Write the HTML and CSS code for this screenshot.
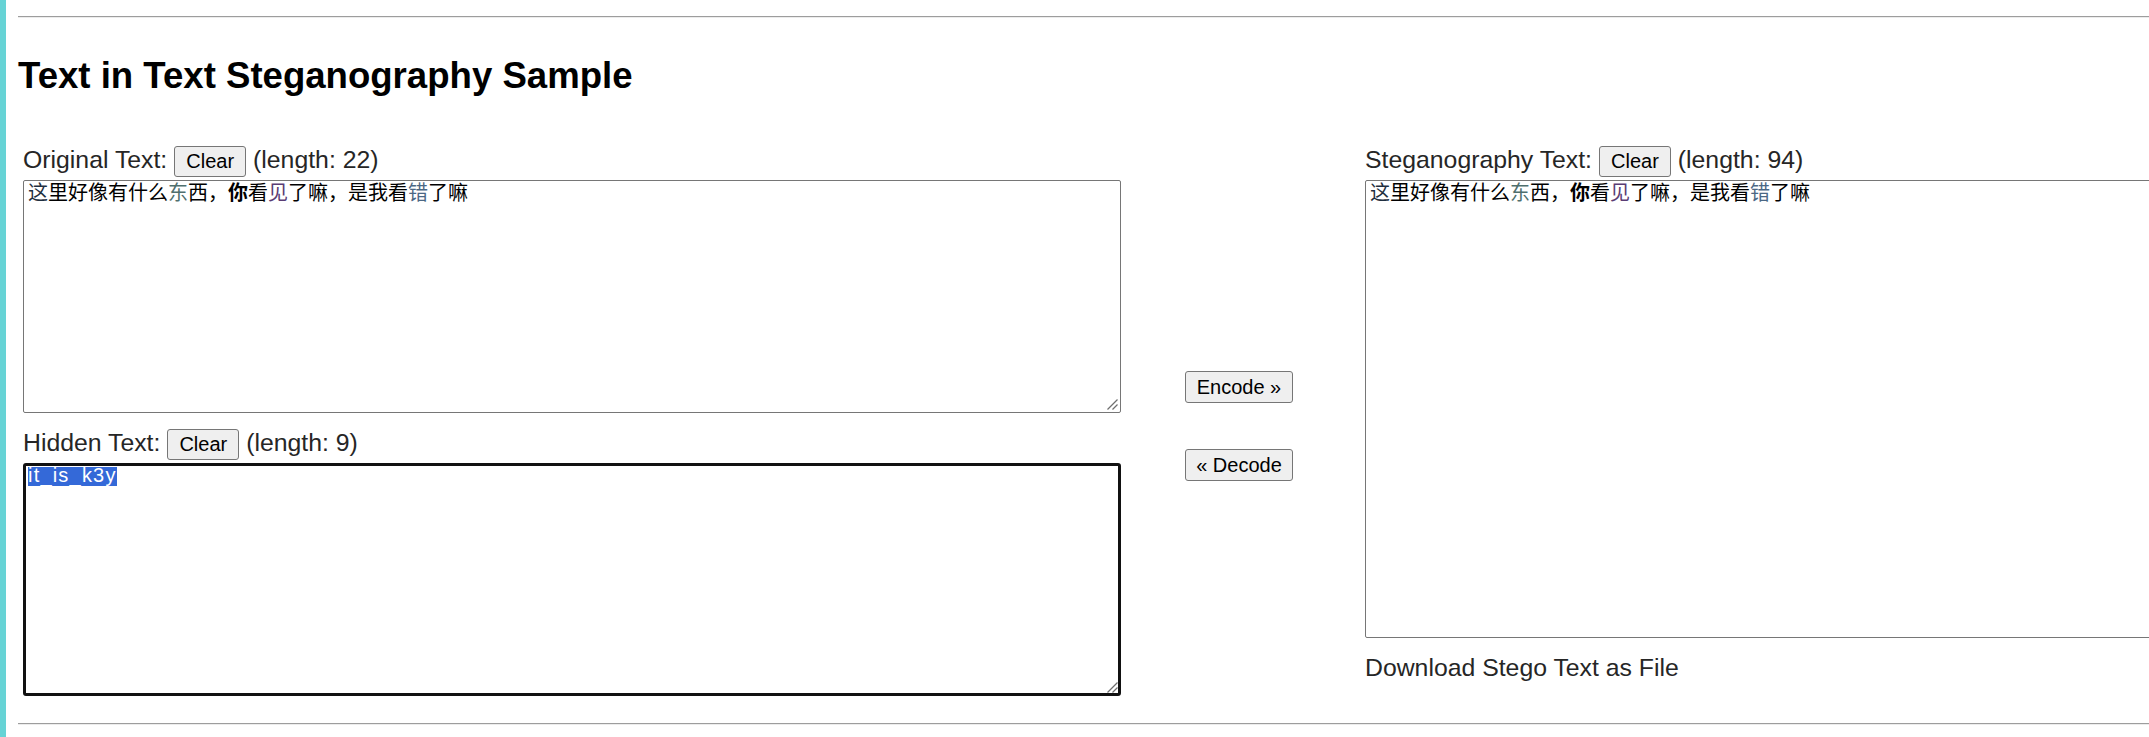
FILE: index.html
```html
<!DOCTYPE html>
<html lang="en">
<head>
<meta charset="utf-8">
<title>Text in Text Steganography Sample</title>
<link rel="stylesheet" href="styles.css">
</head>
<body>
<hr class="rule rule-top">
<h2 class="title">Text in Text Steganography Sample</h2>
<div class="main">
  <div class="col col-left">
    <div class="label-row">
      <span class="label">Original Text:</span>
      <button class="btn">Clear</button>
      <span class="label">(length: 22)</span>
    </div>
    <div class="box box-short"><span class="c1">这</span>里好像有什么<span class="c2">东</span>西，<b class="bold">你</b>看<span class="c3">见</span>了嘛，是我看<span class="c4">错</span>了嘛<svg class="grip" width="14" height="14" viewBox="0 0 14 14" aria-hidden="true"><path d="M3.5 13.5 L13.5 3.5 M8.5 13.5 L13.5 8.5" stroke="#6f6f6f" stroke-width="1.3" fill="none"/></svg></div>
    <div class="label-row label-row-gap">
      <span class="label">Hidden Text:</span>
      <button class="btn">Clear</button>
      <span class="label">(length: 9)</span>
    </div>
    <div class="box box-short box-focus"><span class="sel">it_is_k3y</span><svg class="grip grip-focus" width="14" height="14" viewBox="0 0 14 14" aria-hidden="true"><path d="M3.5 13.5 L13.5 3.5 M8.5 13.5 L13.5 8.5" stroke="#6f6f6f" stroke-width="1.3" fill="none"/></svg></div>
  </div>
  <div class="col col-mid">
    <button class="btn btn-big">Encode »</button>
    <button class="btn btn-big btn-decode">« Decode</button>
  </div>
  <div class="col col-right">
    <div class="label-row">
      <span class="label">Steganography Text:</span>
      <button class="btn">Clear</button>
      <span class="label">(length: 94)</span>
    </div>
    <div class="box box-tall"><span class="c1">这</span>里好像有什么<span class="c2">东</span>西，<b class="bold">你</b>看<span class="c3">见</span>了嘛，是我看<span class="c4">错</span>了嘛</div>
    <div class="download">Download Stego Text as File</div>
  </div>
</div>
<hr class="rule rule-bottom">
</body>
</html>
```

FILE: styles.css
```css
html, body {
  background: #ffffff;
}

body {
  margin: 0;
  min-height: 100vh;
  box-sizing: border-box;
  border-left: 6px solid #66d3d5;
  overflow: hidden;
  font-family: "Liberation Sans", Arial, sans-serif;
  font-size: 24.8px;
  color: #262626;
}

.rule {
  display: block;
  height: 0;
  border: 0;
  border-top: 1px solid #9d9d9d;
  border-bottom: 1px solid #ececec;
  margin: 0 0 0 12px;
}

.rule-top {
  margin-top: 16px;
}

.rule-bottom {
  margin-top: 27px;
}

.title {
  margin: 36px 0 0 12px;
  font-size: 36.6px;
  line-height: 43px;
  font-weight: bold;
  color: #000000;
}

.main {
  display: flex;
  align-items: flex-start;
  margin-top: 43px;
  padding-left: 17px;
}

.col {
  flex: none;
}

.col-left {
  width: 1098px;
}

.col-right {
  width: 1098px;
}

.col-mid {
  width: 244px;
  box-sizing: border-box;
  padding-right: 8px;
  padding-top: 231px;
  display: flex;
  flex-direction: column;
  align-items: center;
}

.label-row {
  display: flex;
  align-items: flex-start;
  column-gap: 7px;
  height: 40px;
}

.label-row-gap {
  margin-top: 10px;
}

.label {
  line-height: 34px;
  margin-top: 2.5px;
  white-space: nowrap;
}

.btn {
  font-family: "Liberation Sans", Arial, sans-serif;
  font-size: 20px;
  line-height: 23px;
  color: #000000;
  background: #efefef;
  border: 1px solid #767676;
  border-radius: 3px;
  padding: 3px 11px;
  margin: 6px 0 0 0;
}

.btn-big {
  margin: 0;
  padding: 3.5px 10.5px;
}

.btn-decode {
  margin-top: 46px;
}

.box {
  position: relative;
  box-sizing: border-box;
  border: 1px solid #767676;
  border-radius: 2px;
  padding: 0 4px;
  font-family: "Noto Sans CJK SC", "Noto Sans CJK JP", sans-serif;
  font-size: 20px;
  line-height: 22px;
  color: #000000;
  background: #ffffff;
}

.box-short {
  height: 233px;
}

.box-tall {
  height: 458px;
}

.box-focus {
  border: 3px solid #111111;
  border-radius: 3px;
  padding: 1px 2px;
}

.grip {
  position: absolute;
  right: 2px;
  bottom: 2px;
}

.grip-focus {
  right: 0;
  bottom: 0;
}

.sel {
  display: inline-block;
  vertical-align: top;
  height: 19px;
  line-height: 17px;
  font-family: "Liberation Sans", Arial, sans-serif;
  font-size: 20px;
  letter-spacing: 1.2px;
  color: #ffffff;
  background: #3469d8;
}

.bold {
  font-weight: bold;
}

.c1 {
  color: #1f2f40;
}

.c2 {
  color: #4f6f6e;
}

.c3 {
  color: #5a3c74;
}

.c4 {
  color: #4b6784;
}

.download {
  margin-top: 13px;
  line-height: 34px;
  white-space: nowrap;
}
```
